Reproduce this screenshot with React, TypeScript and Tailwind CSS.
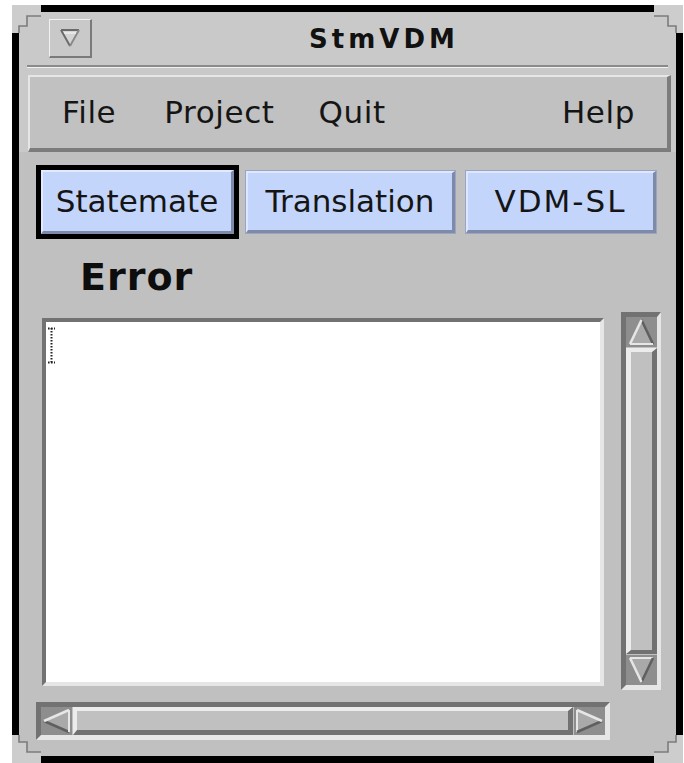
import React from "react";

const SANS = "font-['DejaVu_Sans','Liberation_Sans',sans-serif]";

// Stair-shaped resize handles at the four window corners
const CORNERS = {
  tl: {
    fill: "0,0 29,0 29,11 15,11 15,21 7,21 7,28 0,28",
    edge: "29,11 15,11 15,21 7,21 7,28",
  },
  tr: {
    fill: "29,0 0,0 0,11 14,11 14,21 22,21 22,28 29,28",
    edge: "0,11 14,11 14,21 22,21 22,28",
  },
  bl: {
    fill: "0,28 29,28 29,17 15,17 15,7 7,7 7,0 0,0",
    edge: "29,17 15,17 15,7 7,7 7,0",
  },
  br: {
    fill: "29,28 0,28 0,17 14,17 14,7 22,7 22,0 29,0",
    edge: "0,17 14,17 14,7 22,7 22,0",
  },
};

function Corner({ kind, className }: { kind: keyof typeof CORNERS; className: string }) {
  const c = CORNERS[kind];
  return (
    <svg width="29" height="28" viewBox="0 0 29 28" className={className}>
      <polygon points={c.fill} fill="#cdcdcd" />
      <polyline points={c.edge} fill="none" stroke="#7c7c7c" strokeWidth="1.6" />
    </svg>
  );
}

type Dir = "up" | "down" | "left" | "right";

function Arrow({ dir }: { dir: Dir }) {
  const light = "#e6e6e6";
  const dark = "#5f5f5f";
  const fill = "#a9a9a9";
  if (dir === "up") {
    return (
      <svg width="31" height="30" viewBox="0 0 31 30">
        <polygon points="15.5,3 4,27 27,27" fill={fill} />
        <line x1="15.5" y1="3" x2="27" y2="27" stroke={dark} strokeWidth="2.5" />
        <line x1="15.5" y1="3" x2="4" y2="27" stroke={light} strokeWidth="2.5" />
        <line x1="4" y1="27" x2="27" y2="27" stroke={light} strokeWidth="2" />
      </svg>
    );
  }
  if (dir === "down") {
    return (
      <svg width="31" height="30" viewBox="0 0 31 30">
        <polygon points="4,3 27,3 15.5,27" fill={fill} />
        <line x1="4" y1="3" x2="27" y2="3" stroke={light} strokeWidth="2" />
        <line x1="27" y1="3" x2="15.5" y2="27" stroke={dark} strokeWidth="2.5" />
        <line x1="4" y1="3" x2="15.5" y2="27" stroke={light} strokeWidth="2.5" />
      </svg>
    );
  }
  if (dir === "left") {
    return (
      <svg width="31" height="28" viewBox="0 0 31 28">
        <polygon points="3,14 28,3 28,25" fill={fill} />
        <line x1="3" y1="14" x2="28" y2="25" stroke={dark} strokeWidth="2.5" />
        <line x1="3" y1="14" x2="28" y2="3" stroke={light} strokeWidth="2.5" />
        <line x1="28" y1="3" x2="28" y2="25" stroke={light} strokeWidth="2" />
      </svg>
    );
  }
  return (
    <svg width="31" height="28" viewBox="0 0 31 28">
      <polygon points="3,3 28,14 3,25" fill={fill} />
      <line x1="3" y1="3" x2="3" y2="25" stroke={light} strokeWidth="2" />
      <line x1="3" y1="25" x2="28" y2="14" stroke={dark} strokeWidth="2.5" />
      <line x1="3" y1="3" x2="28" y2="14" stroke={light} strokeWidth="2.5" />
    </svg>
  );
}

function TextCaret() {
  return (
    <svg width="9" height="37" viewBox="0 0 9 37">
      <line x1="4.5" y1="1" x2="4.5" y2="36" stroke="#222" strokeWidth="2" strokeDasharray="1.6 1.4" />
      <line x1="1" y1="1.5" x2="8" y2="1.5" stroke="#222" strokeWidth="1.8" strokeDasharray="1.6 1.4" />
      <line x1="1" y1="35.5" x2="8" y2="35.5" stroke="#222" strokeWidth="1.8" strokeDasharray="1.6 1.4" />
    </svg>
  );
}

export default function App() {
  return (
    <div className={`relative w-[684px] h-[763px] bg-white overflow-hidden ${SANS}`}>
      <div className="ml-[12px] mt-[5px] w-[671px] h-[758px] border-[7px] border-black bg-[#c9c9c9] flex flex-col">
        {/* Title bar */}
        <div className="h-[53px] shrink-0 flex items-center">
          <div className="ml-[30px] w-[43px] h-[39px] shrink-0 bg-[#c9c9c9] border-t border-l border-t-[#f2f2f2] border-l-[#f2f2f2] border-b-2 border-r-2 border-b-[#7a7a7a] border-r-[#7a7a7a] flex items-center justify-center">
            <svg width="22" height="20" viewBox="0 0 22 20">
              <polygon points="2,2 20,2 11,18" fill="#d4d4d4" />
              <line x1="2" y1="2" x2="20" y2="2" stroke="#6a6a6a" strokeWidth="2" />
              <line x1="2" y1="2" x2="11" y2="18" stroke="#6a6a6a" strokeWidth="2" />
              <line x1="20" y1="2" x2="11" y2="18" stroke="#8a8a8a" strokeWidth="2" />
              <line x1="5" y1="5" x2="17" y2="5" stroke="#f4f4f4" strokeWidth="1.2" />
            </svg>
          </div>
          <div className="flex-1 text-center text-[26px] font-bold tracking-[4px] text-[#111] leading-none">
            StmVDM
          </div>
        </div>

        {/* Etched separator */}
        <div className="mx-[8px] h-[3px] shrink-0 border-t-2 border-t-[#8a8a8a] border-b border-b-[#f0f0f0]" />

        {/* Menu bar */}
        <div className="mt-[7px] ml-[9px] mr-[5px] h-[77px] shrink-0 bg-[#c1c1c1] border-t-2 border-l-2 border-t-[#e6e6e6] border-l-[#e6e6e6] border-b-[4px] border-r-[4px] border-b-[#7c7c7c] border-r-[#7c7c7c] flex items-center text-[31px] tracking-[0.6px] text-[#151515]">
          <span className="ml-[32px]">File</span>
          <span className="ml-[48px]">Project</span>
          <span className="ml-[44px]">Quit</span>
          <span className="ml-auto mr-[32px]">Help</span>
        </div>

        {/* Main panel */}
        <div className="flex-1 bg-[#c0c0c0] flex flex-col">
          <div className="mt-[13px] ml-[17px] flex items-center">
            <div className="border-[5px] border-black">
              <div className="w-[193px] h-[64px] bg-[#c4d5fb] border-t-2 border-l-2 border-t-[#e2eaff] border-l-[#e2eaff] border-b-[3px] border-r-[3px] border-b-[#7e8aa8] border-r-[#7e8aa8] flex items-center justify-center text-[31px] text-[#151515]">
                Statemate
              </div>
            </div>
            <div className="ml-[7px] w-[209px] h-[62px] bg-[#c4d5fb] shadow-[0_0_0_1px_#9aa5c2] border-t-2 border-l-2 border-t-[#dde7ff] border-l-[#dde7ff] border-b-[3px] border-r-[3px] border-b-[#7e8aa8] border-r-[#7e8aa8] flex items-center justify-center text-[31px] text-[#151515]">
              Translation
            </div>
            <div className="ml-[11px] w-[190px] h-[62px] bg-[#c4d5fb] shadow-[0_0_0_1px_#9aa5c2] border-t-2 border-l-2 border-t-[#dde7ff] border-l-[#dde7ff] border-b-[3px] border-r-[3px] border-b-[#7e8aa8] border-r-[#7e8aa8] flex items-center justify-center text-[31px] tracking-[2px] text-[#151515]">
              VDM-SL
            </div>
          </div>

          <div className="mt-[19px] ml-[61px] text-[38px] leading-[38px] font-bold tracking-[1px] text-[#0d0d0d]">
            Error
          </div>

          <div className="mt-[16px] flex items-start">
            {/* Text area */}
            <div className="ml-[23px] mt-[6px] w-[562px] h-[368px] bg-white border-t-[4px] border-l-[4px] border-t-[#727272] border-l-[#727272] border-b-[4px] border-r-[4px] border-b-[#e6e6e6] border-r-[#e6e6e6] pl-[1px] pt-[5px]">
              <TextCaret />
            </div>

            {/* Vertical scrollbar */}
            <div className="ml-[17px] w-[40px] h-[378px] bg-[#c0c0c0] border-t-[5px] border-l-[5px] border-t-[#727272] border-l-[#727272] border-b-[5px] border-r-[4px] border-b-[#e6e6e6] border-r-[#e6e6e6] flex flex-col">
              <div className="h-[30px] shrink-0 bg-[#8e8e8e] flex items-center justify-center">
                <Arrow dir="up" />
              </div>
              <div className="flex-1 my-[1px] bg-[#c0c0c0] border-t-[4px] border-l-[5px] border-t-[#ececec] border-l-[#ececec] border-b-[4px] border-r-[5px] border-b-[#717171] border-r-[#717171]" />
              <div className="h-[30px] shrink-0 bg-[#8e8e8e] flex items-center justify-center">
                <Arrow dir="down" />
              </div>
            </div>
          </div>

          {/* Horizontal scrollbar */}
          <div className="mt-[12px] ml-[17px] w-[574px] h-[38px] bg-[#c0c0c0] border-t-[5px] border-l-[5px] border-t-[#727272] border-l-[#727272] border-b-[5px] border-r-[5px] border-b-[#e6e6e6] border-r-[#e6e6e6] flex">
            <div className="w-[31px] shrink-0 bg-[#8e8e8e] flex items-center justify-center">
              <Arrow dir="left" />
            </div>
            <div className="flex-1 mx-[1px] bg-[#c0c0c0] border-t-[4px] border-l-[4px] border-t-[#ececec] border-l-[#ececec] border-b-[5px] border-r-[5px] border-b-[#717171] border-r-[#717171]" />
            <div className="w-[31px] shrink-0 bg-[#8e8e8e] flex items-center justify-center">
              <Arrow dir="right" />
            </div>
          </div>
        </div>
      </div>

      <Corner kind="tl" className="absolute left-[12px] top-[5px]" />
      <Corner kind="tr" className="absolute left-[654px] top-[5px]" />
      <Corner kind="bl" className="absolute left-[12px] top-[735px]" />
      <Corner kind="br" className="absolute left-[654px] top-[735px]" />
    </div>
  );
}
